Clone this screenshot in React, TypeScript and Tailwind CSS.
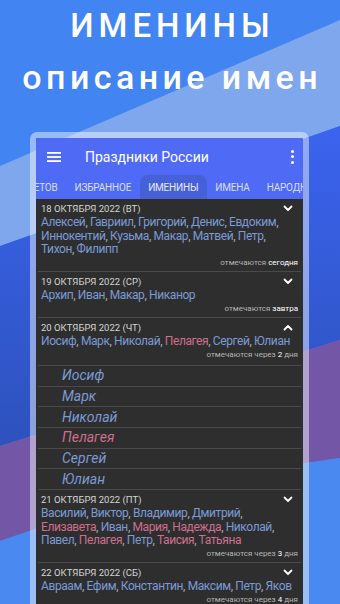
import React from "react";

type Name = { n: string; f?: boolean };

interface DayProps {
  date: string;
  names: Name[];
  when: string;
  whenBold: string;
  whenTail?: string;
  open?: boolean;
}

const font = { fontFamily: "Roboto, 'Noto Sans', sans-serif" };

const Chevron = ({ up }: { up?: boolean }) => (
  <svg width="10" height="7" viewBox="0 0 10 7" className="mt-[3px]">
    <path
      d={up ? "M1.5 5.5 L5 2 L8.5 5.5" : "M1.5 1.5 L5 5 L8.5 1.5"}
      fill="none"
      stroke="#ffffff"
      strokeWidth="1.8"
      strokeLinecap="round"
      strokeLinejoin="round"
    />
  </svg>
);

const NameList = ({ names }: { names: Name[] }) => (
  <div className="text-[12px] leading-[13.5px] tracking-[-0.4px]">
    {names.map((x, i) => (
      <React.Fragment key={i}>
        <span className={x.f ? "text-[#cf6f8f]" : "text-[#7b9ad6]"}>{x.n}</span>
        {i < names.length - 1 && <span className="text-[#a8a8a8]">, </span>}
      </React.Fragment>
    ))}
  </div>
);

const Day: React.FC<DayProps> = ({ date, names, when, whenBold, whenTail, open }) => (
  <>
    <div
      className={`mx-[2px] border-b border-[#4a4a4a] px-[3px] pt-[3px] ${
        open ? "pb-[4px]" : "pb-[2px]"
      }`}
    >
      <div className="flex items-start justify-between h-[14px]">
        <span className="text-[9.5px] leading-[14px] text-[#d6d6d6]">{date}</span>
        <span className="pr-[5px]">
          <Chevron up={open} />
        </span>
      </div>
      <NameList names={names} />
      <div className="text-right text-[8px] leading-[12px] text-[#b4b4b4] mt-[0.5px]">
        {when} <span className="text-white">{whenBold}</span>
        {whenTail ? ` ${whenTail}` : ""}
      </div>
    </div>
    {open &&
      names.map((x, i) => (
        <div
          key={i}
          className="mx-[2px] h-[20.7px] border-b border-[#4a4a4a] pl-[24px] flex items-center"
        >
          <span
            className={`text-[14px] italic ${x.f ? "text-[#cf6f8f]" : "text-[#7b9ad6]"}`}
          >
            {x.n}
          </span>
        </div>
      ))}
  </>
);

const m = (n: string): Name => ({ n });
const w = (n: string): Name => ({ n, f: true });

export default function App() {
  return (
    <div className="relative w-[340px] h-[604px] overflow-hidden bg-[#4284f2]" style={font}>
      <svg
        className="absolute inset-0"
        width="340"
        height="604"
        viewBox="0 0 340 604"
      >
        <defs>
          <linearGradient id="dk" x1="0" y1="0" x2="0" y2="1">
            <stop offset="0" stopColor="#3b63ee" />
            <stop offset="1" stopColor="#2d52bc" />
          </linearGradient>
        </defs>
        <polygon points="0,166 340,20 340,126 0,246" fill="#7ea7ee" />
        <polygon points="0,246 340,126 340,340 0,446" fill="url(#dk)" />
        <path d="M0 446 L340 340 L340 458 Q170 480 0 541 Z" fill="#7356a6" />
        <path d="M0 541 Q170 480 340 458 L340 604 L0 604 Z" fill="#4a89ef" />
      </svg>

      <div className="relative text-white text-center">
        <div className="pt-[6px] text-[33px] leading-[40px] font-medium tracking-[0.15em] pl-[0.15em]">
          ИМЕНИНЫ
        </div>
        <div className="mt-[11px] text-[34px] leading-[40px] font-medium tracking-[0.13em] pl-[0.13em]">
          описание имен
        </div>
      </div>

      <div className="relative ml-[30px] mt-[35px] w-[279px] rounded-t-[7px] border-[6px] border-b-0 border-white/45 h-[480px] overflow-hidden">
        <div className="bg-[#4f6bf5] h-[37px] flex items-center text-white">
          <svg width="14" height="12" viewBox="0 0 14 12" className="ml-[11px]">
            <rect x="0" y="1" width="14" height="1.8" fill="#fff" />
            <rect x="0" y="5.1" width="14" height="1.8" fill="#fff" />
            <rect x="0" y="9.2" width="14" height="1.8" fill="#fff" />
          </svg>
          <span className="ml-[24px] text-[14px] leading-[20px]">Праздники России</span>
          <span className="ml-auto mr-[9px] flex flex-col gap-[2.5px]">
            <span className="w-[3px] h-[3px] rounded-full bg-white" />
            <span className="w-[3px] h-[3px] rounded-full bg-white" />
            <span className="w-[3px] h-[3px] rounded-full bg-white" />
          </span>
        </div>
        <div className="bg-[#4f6bf5] h-[24px] flex items-stretch whitespace-nowrap text-[10px] tracking-[-0.2px] text-[#d9defc] overflow-hidden">
          <div className="ml-[-24px] px-[8.5px] flex items-center">ЦВЕТОВ</div>
          <div className="px-[8.5px] flex items-center">ИЗБРАННОЕ</div>
          <div className="px-[8.5px] flex items-center bg-[#4660d8] rounded-t-[8px] text-[#e6e9ff]">
            ИМЕНИНЫ
          </div>
          <div className="px-[8.5px] flex items-center">ИМЕНА</div>
          <div className="px-[8.5px] flex items-center">НАРОДНЫЕ</div>
        </div>
        <div className="bg-[#2e2e2e] h-full">
          <Day
            date="18 ОКТЯБРЯ 2022 (ВТ)"
            names={[
              m("Алексей"),
              m("Гавриил"),
              m("Григорий"),
              m("Денис"),
              m("Евдоким"),
              m("Иннокентий"),
              m("Кузьма"),
              m("Макар"),
              m("Матвей"),
              m("Петр"),
              m("Тихон"),
              m("Филипп"),
            ]}
            when="отмечаются"
            whenBold="сегодня"
          />
          <Day
            date="19 ОКТЯБРЯ 2022 (СР)"
            names={[m("Архип"), m("Иван"), m("Макар"), m("Никанор")]}
            when="отмечаются"
            whenBold="завтра"
          />
          <Day
            date="20 ОКТЯБРЯ 2022 (ЧТ)"
            names={[m("Иосиф"), m("Марк"), m("Николай"), w("Пелагея"), m("Сергей"), m("Юлиан")]}
            when="отмечаются через"
            whenBold="2"
            whenTail="дня"
            open
          />
          <Day
            date="21 ОКТЯБРЯ 2022 (ПТ)"
            names={[
              m("Василий"),
              m("Виктор"),
              m("Владимир"),
              m("Дмитрий"),
              w("Елизавета"),
              m("Иван"),
              w("Мария"),
              w("Надежда"),
              m("Николай"),
              m("Павел"),
              w("Пелагея"),
              m("Петр"),
              w("Таисия"),
              w("Татьяна"),
            ]}
            when="отмечаются через"
            whenBold="3"
            whenTail="дня"
          />
          <Day
            date="22 ОКТЯБРЯ 2022 (СБ)"
            names={[m("Авраам"), m("Ефим"), m("Константин"), m("Максим"), m("Петр"), m("Яков")]}
            when="отмечаются через"
            whenBold="4"
            whenTail="дня"
          />
        </div>
      </div>
    </div>
  );
}
